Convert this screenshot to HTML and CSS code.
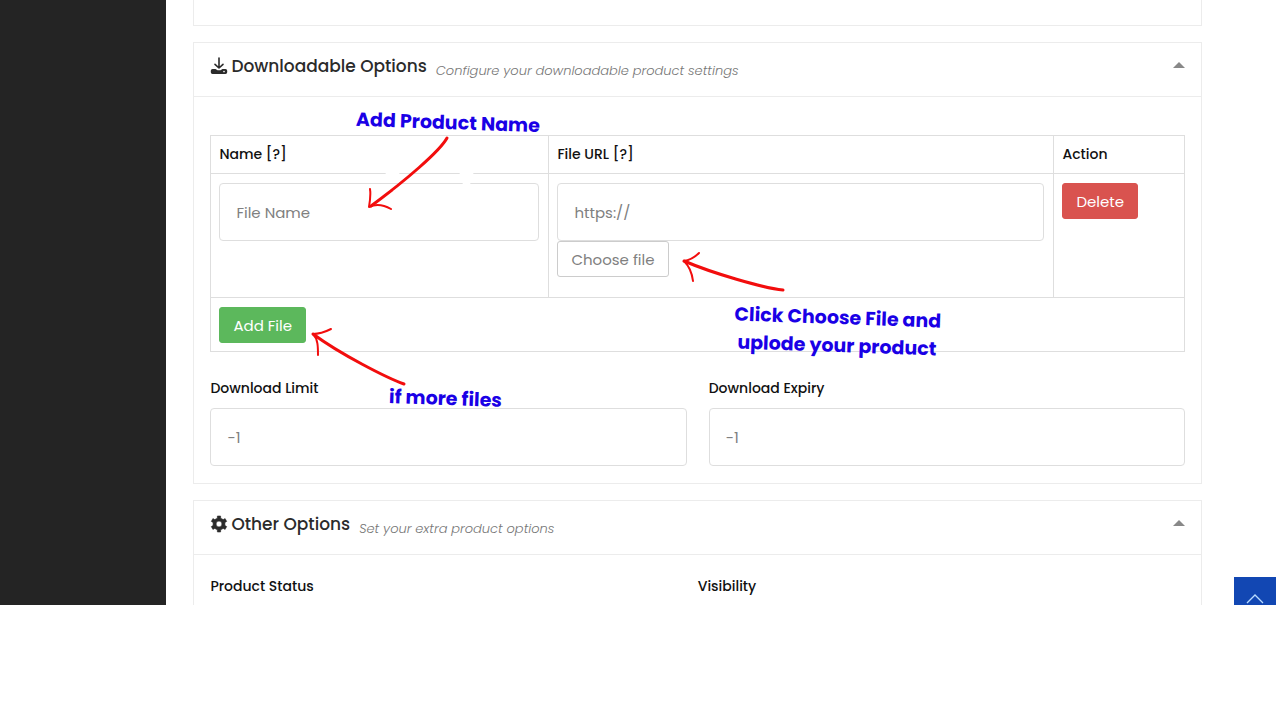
FILE: index.html
```html
<!DOCTYPE html>
<html lang="en">
<head>
    <meta charset="UTF-8">
    <meta name="viewport" content="width=device-width, initial-scale=1.0">
    <title>Add Product</title>
    <link rel="stylesheet" href="styles.css">
</head>
<body>
    <div class="page">
        <aside class="sidebar"></aside>

        <main class="content">
            <section class="panel panel-prev"></section>

            <section class="panel">
                <header class="panel-head">
                    <svg class="icon" viewBox="0 0 18 18" aria-hidden="true">
                        <path d="M9 1v10M5 7.300 9 11l4-3.700" fill="none" stroke="#2b2b2b" stroke-width="1.600" stroke-linecap="round" stroke-linejoin="round"/>
                        <path d="M2.500 12h3l2 1.300h3l2-1.300h3a1.700 1.700 0 0 1 1.700 1.700v1.600a1.700 1.700 0 0 1-1.700 1.700h-13a1.700 1.700 0 0 1-1.700-1.700v-1.600A1.700 1.700 0 0 1 2.500 12z" fill="#2b2b2b"/>
                        <circle cx="14" cy="14.600" r="0.800" fill="#fff"/>
                    </svg>
                    <h2>Downloadable Options</h2>
                    <p>Configure your downloadable product settings</p>
                    <span class="caret"></span>
                </header>

                <div class="panel-body">
                    <table class="files">
                        <thead>
                            <tr>
                                <th class="col-name">Name [?]</th>
                                <th class="col-url">File URL [?]</th>
                                <th>Action</th>
                            </tr>
                        </thead>
                        <tbody>
                            <tr class="file-row">
                                <td><input class="field" type="text" placeholder="File Name" aria-label="File name"></td>
                                <td>
                                    <input class="field" type="text" placeholder="https://" aria-label="File URL">
                                    <button type="button" class="btn btn-choose">Choose file</button>
                                </td>
                                <td><button type="button" class="btn btn-delete">Delete</button></td>
                            </tr>
                        </tbody>
                        <tfoot>
                            <tr>
                                <td colspan="3"><button type="button" class="btn btn-add">Add File</button></td>
                            </tr>
                        </tfoot>
                    </table>

                    <div class="limits">
                        <div>
                            <label for="limit">Download Limit</label>
                            <input class="field" type="text" id="limit" placeholder="-1">
                        </div>
                        <div>
                            <label for="expiry">Download Expiry</label>
                            <input class="field" type="text" id="expiry" placeholder="-1">
                        </div>
                    </div>
                </div>

                <!-- help notes over the form -->
                <svg class="arrows" width="640" height="360" viewBox="194 43 640 360" aria-hidden="true">
                    <path class="gap" d="M387 173h11M461 173h11M464 183h5"/>
                    <path d="M447 138C440 151 405 181 371 206"/>
                    <path class="tip" d="M370 189C371 195 370 201 369 207C377 203 384 205 391 209"/>
                    <path d="M783 290C763 288 712 273 684 261"/>
                    <path class="tip" d="M699 253C695 257 690 260 684 261C690 267 692 273 693 281"/>
                    <path d="M404 384C387 378 340 354 313 334"/>
                    <path class="tip" d="M331 329C325 332 319 334 313 334C318 339 318 347 318 355"/>
                </svg>
                <p class="note note-name">Add Product Name</p>
                <p class="note note-choose">Click Choose File and<br>uplode your product</p>
                <p class="note note-more">if more files</p>
            </section>

            <section class="panel">
                <header class="panel-head">
                    <svg class="icon" viewBox="0 0 18 18" aria-hidden="true">
                        <path d="M7.400 1h3.200l.1 2.200 2.500 1.400 1.900-1 1.600 2.800-1.800 1.200v2.800l1.800 1.200-1.600 2.800-1.900-1-2.500 1.400-.1 2.200H7.400l-.1-2.200-2.500-1.400-1.900 1-1.600-2.800 1.800-1.200V7.600L1.300 6.400l1.600-2.800 1.900 1 2.500-1.400zM9 6.100a2.900 2.900 0 1 0 0 5.800 2.900 2.900 0 0 0 0-5.800z" fill="#2b2b2b" fill-rule="evenodd" stroke="#2b2b2b" stroke-width="0.600" stroke-linejoin="round"/>
                    </svg>
                    <h2>Other Options</h2>
                    <p>Set your extra product options</p>
                    <span class="caret"></span>
                </header>
                <div class="panel-body status">
                    <span>Product Status</span>
                    <span>Visibility</span>
                </div>
            </section>
        </main>

        <a class="to-top" href="#" aria-label="Back to top">
            <svg width="18" height="10" viewBox="0 0 18 10"><path d="M1 9 9 1l8 8" fill="none" stroke="#b9dcff" stroke-width="1.300"/></svg>
        </a>
    </div>
</body>
</html>
```

FILE: styles.css
```css
* {
    box-sizing: border-box;
}
body {
    margin: 0;
    background: #fff;
    color: #111;
    font-family: Poppins, Inter, sans-serif;
    font-size: 14px;
}
.page {
    position: relative;
    display: flex;
    height: 84vh;
    overflow: hidden;
}
.sidebar {
    flex: 0 0 13%;
    background: #242424;
}
.content {
    flex: 1;
    display: flex;
    flex-direction: column;
    gap: 16px;
    padding: 0 78px 0 27px;
}
.panel {
    position: relative;
    flex-shrink: 0;
    border: 1px solid #ececec;
}
.panel-prev {
    height: 26px;
    border-top: 0;
}
.panel-head {
    display: flex;
    align-items: center;
    height: 54px;
    padding: 0 16px;
    border-bottom: 1px solid #ececec;
}
.panel-head h2 {
    margin: 0 9px 7px 3px;
    color: #2b2b2b;
    font-size: 17px;
    font-weight: 500;
}
.panel-head p {
    margin: 3px 0 0;
    color: #777;
    font-size: 13px;
    font-style: italic;
    font-weight: 300;
}
.icon {
    width: 18px;
    height: 18px;
    margin-bottom: 7px;
}
.caret {
    margin: 0 0 10px auto;
    border: 6px solid transparent;
    border-top: 0;
    border-bottom-color: #888;
}
.panel-body {
    padding: 38px 16px 17px;
}
.files {
    width: 100%;
    table-layout: fixed;
    border-collapse: collapse;
}
.files th,
.files td {
    padding: 9px 9px 8px 8px;
    border: 1px solid #dedede;
    text-align: left;
    vertical-align: top;
}
.files th {
    height: 38px;
    padding: 8px;
    font-weight: 500;
    line-height: 20px;
}
.col-name {
    width: 338px;
}
.col-url {
    width: 505px;
}
.file-row {
    height: 124px;
}
.field {
    display: block;
    width: 100%;
    height: 58px;
    padding: 0 16px;
    border: 1px solid #dedede;
    border-radius: 4px;
    background: #fff;
    font-family: inherit;
    font-size: 15px;
}
.field::placeholder {
    color: #808080;
}
.btn {
    display: block;
    height: 36px;
    padding: 0 13px;
    border: 1px solid;
    border-radius: 3px;
    color: #fff;
    font-family: inherit;
    font-size: 15px;
}
.btn-choose {
    border-color: #ccc;
    background: #fff;
    color: #808080;
}
.btn-delete {
    border-color: #d9534f;
    background: #d9534f;
}
.btn-add {
    border-color: #5cb85c;
    background: #5cb85c;
}
.limits {
    display: grid;
    grid-template-columns: 1fr 1fr;
    gap: 22px;
    padding-top: 26px;
}
.limits label {
    display: block;
    height: 30px;
    line-height: 20px;
    font-weight: 500;
}
.status {
    display: grid;
    grid-template-columns: 1fr 1fr;
    padding-top: 21px;
    line-height: 20px;
    font-weight: 500;
}
.arrows {
    position: absolute;
    top: 0;
    left: 0;
    fill: none;
    stroke: #f20d0d;
    stroke-width: 3;
    stroke-linecap: round;
    stroke-linejoin: round;
    pointer-events: none;
}
.arrows .tip {
    stroke-width: 2;
}
.arrows .gap {
    stroke: #fff;
}
.note {
    position: absolute;
    margin: 0;
    color: #1a00e6;
    font-size: 19px;
    font-weight: 700;
    line-height: 28px;
    text-align: center;
    white-space: nowrap;
    transform: rotate(2deg);
}
.note-name {
    top: 66px;
    left: 162px;
}
.note-choose {
    top: 261px;
    left: 540px;
}
.note-more {
    top: 342px;
    left: 195px;
}
.to-top {
    position: absolute;
    right: 4px;
    bottom: 0;
    display: flex;
    justify-content: center;
    width: 42px;
    height: 28px;
    padding-top: 17px;
    background: #1247b3;
}
```
